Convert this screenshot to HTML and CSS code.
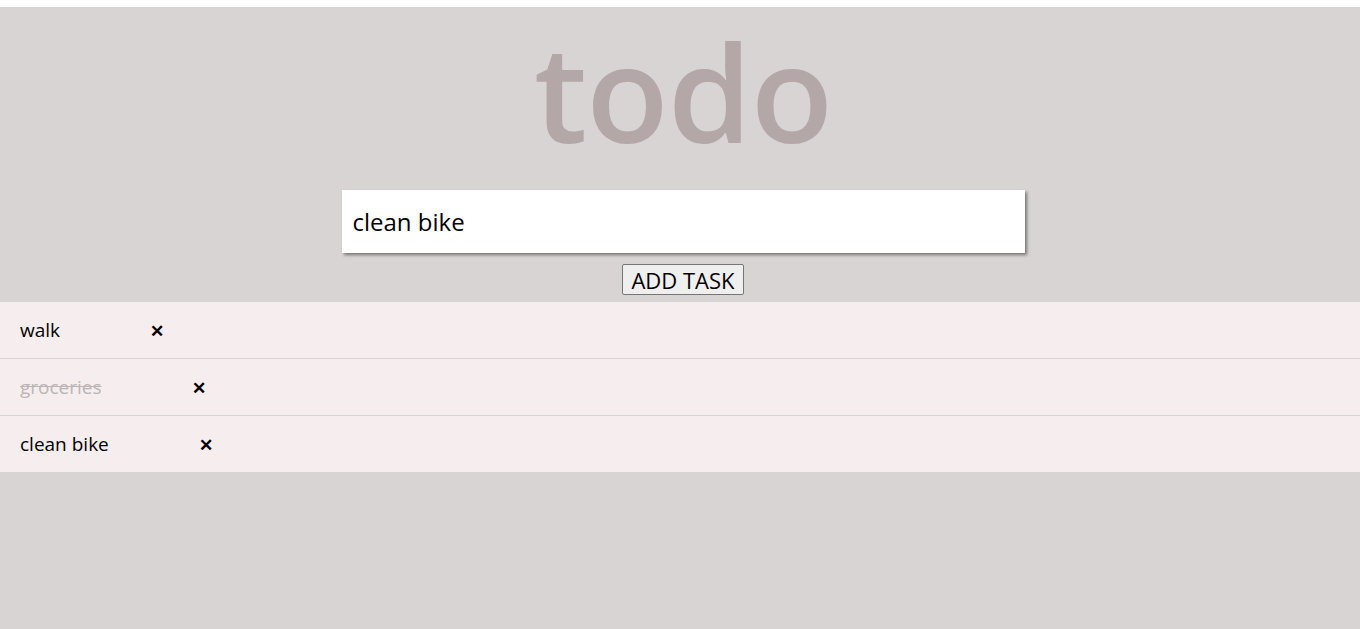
FILE: index.html
```html
<!DOCTYPE html>
<html>
<head>
<meta charset="utf-8">
<link rel="stylesheet" href="styles.css">
</head>
<body>
<div class="app">
  <h1 class="title">todo</h1>
  <form class="add-form">
    <input class="task-input" type="text" value="clean bike">
    <button class="add-btn" type="button">ADD TASK</button>
  </form>
  <ul class="task-list">
    <li class="task"><span class="task-text">walk</span><span class="remove">&#x2715;</span></li>
    <li class="task done"><span class="task-text">groceries</span><span class="remove">&#x2715;</span></li>
    <li class="task"><span class="task-text">clean bike</span><span class="remove">&#x2715;</span></li>
  </ul>
</div>
</body>
</html>
```
FILE: styles.css
```css
html, body {
  margin: 0;
  padding: 0;
  background: #ffffff;
}
.app {
  margin-top: 7px;
  min-height: calc(100vh - 7px);
  background: #d9d4d4;
  font-family: "Open Sans", sans-serif;
  display: flex;
  flex-direction: column;
}
.title {
  margin: -8px 0 -3px 0;
  padding-left: 6px;
  text-align: center;
  font-size: 135px;
  line-height: normal;
  font-weight: 600;
  color: #b3a7a7;
  letter-spacing: -1px;
}
.add-form {
  display: flex;
  flex-direction: column;
  align-items: center;
  gap: 11px;
  padding-top: 10px;
  padding-bottom: 7px;
  padding-left: 6px;
}
.task-input {
  width: 683px;
  height: 63px;
  box-sizing: border-box;
  border: none;
  outline: none;
  padding: 0 11px;
  font-family: "Open Sans", sans-serif;
  font-size: 24px;
  color: #000;
  background: #fff;
  box-shadow: 2px 2px 3px rgba(0,0,0,0.45);
}
.add-btn {
  font-family: "Open Sans", sans-serif;
  font-size: 22px;
  height: 31px;
  padding: 0 8px;
  line-height: 1;
  background: #efefef;
  border: 1px solid #767676;
  border-radius: 2px;
  color: #000;
}
.task-list {
  list-style: none;
  margin: 0;
  padding: 0;
}
.task {
  background: #f6eeee;
  height: 56px;
  display: flex;
  align-items: center;
  padding-left: 20px;
  font-size: 19px;
  color: #000;
  border-bottom: 1px solid #d9d4d4;
}
.task:last-child {
  border-bottom: none;
}
.task.done .task-text {
  color: #bbb5b5;
  text-decoration: line-through;
}
.remove {
  margin-left: 90px;
  font-weight: 700;
  font-size: 17px;
}
```
